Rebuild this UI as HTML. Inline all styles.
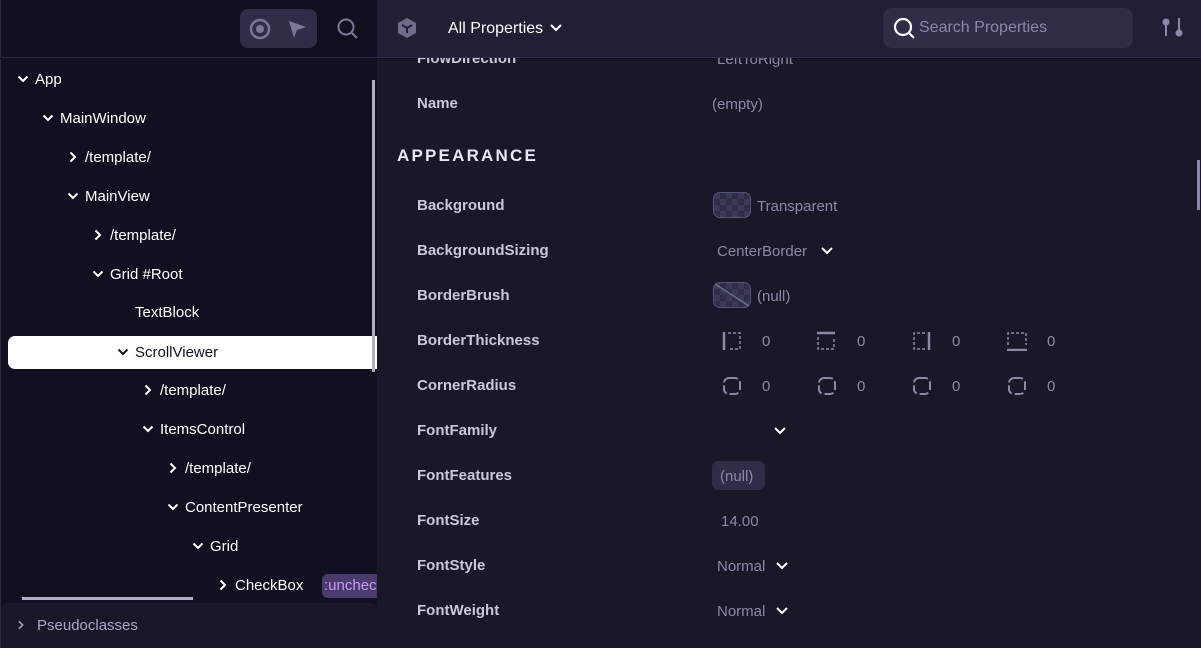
<!DOCTYPE html>
<html><head><style>
*{margin:0;padding:0;box-sizing:border-box}
body{width:1201px;height:648px;overflow:hidden;background:#101020;font-family:"Liberation Sans",sans-serif;font-size:15px;position:relative;color:#fff}
.abs{position:absolute}
.tree div{position:absolute;height:20px;line-height:20px;white-space:nowrap;color:#fff}
.tree svg{display:inline-block;vertical-align:-1px;margin-right:6px}
.lbl{position:absolute;left:417px;color:#c8c8dc;font-weight:bold;font-size:15px}
.val{position:absolute;color:#8a8aa8;font-size:15px}
.sw{position:absolute;left:713px;width:38px;height:26px;border:1.5px solid #55557a;border-radius:7px;background:
conic-gradient(#2e2e48 25%,#3a3a56 0 50%,#2e2e48 0 75%,#3a3a56 0) 0 0/12px 12px}
</style></head><body>
<svg width="0" height="0" style="position:absolute"><defs>
<symbol id="d" viewBox="0 0 12 12"><path d="M1.5 3.5 L6 8 L10.5 3.5" stroke="currentColor" stroke-width="2" fill="none"/></symbol>
<symbol id="r" viewBox="0 0 12 12"><path d="M3.5 1.5 L8 6 L3.5 10.5" stroke="currentColor" stroke-width="2" fill="none"/></symbol>
</defs></svg>
<!-- left header -->
<div class="abs" style="left:0;top:0;width:377px;height:58px;background:#101020;border-bottom:1px solid #2a2a40;border-left:1px solid #2a2a40"></div>
<div class="abs" style="left:240px;top:9px;width:77px;height:39px;background:#2e2e48;border-radius:8px"></div>
<svg class="abs" style="left:248px;top:17px" width="60" height="24"><circle cx="12" cy="12" r="9" fill="none" stroke="#7a7a98" stroke-width="2.5"/><circle cx="12" cy="12" r="4" fill="#7a7a98"/><path d="M41 4 L58 10 L49 13 L46 21 Z" fill="#7a7a98"/></svg>
<svg class="abs" style="left:336px;top:17px" width="24" height="24"><circle cx="10" cy="10" r="7.5" fill="none" stroke="#7a7a98" stroke-width="2"/><path d="M15.5 15.5 L21 21" stroke="#7a7a98" stroke-width="2"/></svg>
<!-- right body -->
<div class="abs" style="left:377px;top:59px;width:824px;height:589px;background:#181829"></div>
<div class="abs" style="left:1197px;top:160px;width:3px;height:50px;background:#8a8aa8"></div>
<div class="lbl" style="top:50px">FlowDirection</div><div class="val" style="left:717px;top:51px">LeftToRight</div>
<!-- right header -->
<div class="abs" style="left:377px;top:0;width:824px;height:58px;background:#1f1f36;border-bottom:1px solid #30304a"></div>
<svg class="abs" style="left:396px;top:17px" width="22" height="22"><path d="M11 1 L20 6 V16 L11 21 L2 16 V6 Z" fill="#6e6e8c"/><path d="M6 8 L11 11 L16 8 M11 11 V16" stroke="#1f1f36" stroke-width="2" fill="none"/></svg>
<div class="abs" style="left:448px;top:20px;font-size:16px;color:#fff">All Properties</div>
<svg class="abs" style="left:549px;top:22px" width="14" height="12"><path d="M2 3 L7 8 L12 3" stroke="#fff" stroke-width="2" fill="none"/></svg>
<div class="abs" style="left:883px;top:8px;width:250px;height:40px;background:#2e2e48;border-radius:9px"></div>
<svg class="abs" style="left:893px;top:17px" width="24" height="24"><circle cx="10" cy="10" r="8" fill="none" stroke="#fff" stroke-width="2.2"/><path d="M16 16 L21 21" stroke="#fff" stroke-width="2.2"/></svg>
<div class="abs" style="left:919px;top:19px;font-size:16px;color:#8a8aa8">Search Properties</div>
<svg class="abs" style="left:1160px;top:16px" width="26" height="24"><circle cx="6" cy="6" r="3.5" fill="#8a8aa8"/><path d="M6 6 V20" stroke="#8a8aa8" stroke-width="2"/><circle cx="19" cy="17" r="3.5" fill="#8a8aa8"/><path d="M19 2 V17" stroke="#8a8aa8" stroke-width="2"/></svg>

<div class="lbl" style="top:95px">Name</div><div class="val" style="left:712px;top:96px">(empty)</div>
<div class="abs" style="left:397px;top:146px;font-size:17px;font-weight:bold;letter-spacing:2.2px;color:#e8e8f4">APPEARANCE</div>
<div class="lbl" style="top:197px">Background</div><div class="sw" style="top:192px"></div><div class="val" style="left:757px;top:198px">Transparent</div>
<div class="lbl" style="top:242px">BackgroundSizing</div><div class="val" style="left:717px;top:243px">CenterBorder</div>
<svg class="abs" style="left:820px;top:245px" width="14" height="12"><path d="M2 3 L7 8 L12 3" stroke="#fff" stroke-width="2" fill="none"/></svg>
<div class="lbl" style="top:287px">BorderBrush</div><div class="sw" style="top:282px"></div><svg class="abs" style="left:713px;top:282px" width="38" height="26"><path d="M2 2 L36 24" stroke="#6a6a8a" stroke-width="1.5"/></svg><div class="val" style="left:757px;top:288px">(null)</div>
<div class="lbl" style="top:332px">BorderThickness</div>
<svg class="abs" style="left:722px;top:331px" width="350" height="20" fill="none" stroke="#8a8aa8">
<path d="M2 1 V19" stroke-width="2.5"/><path d="M6 2 H18 V18 H6" stroke-width="1.5" stroke-dasharray="3 2"/>
<path d="M95 2 H113" stroke-width="2.5"/><path d="M96 6 V18 H112 V6" stroke-width="1.5" stroke-dasharray="3 2"/>
<path d="M207 1 V19" stroke-width="2.5"/><path d="M203 2 H192 V18 H203" stroke-width="1.5" stroke-dasharray="3 2"/>
<path d="M285 19 H305" stroke-width="2.5"/><path d="M286 14 V2 H304 V14" stroke-width="1.5" stroke-dasharray="3 2"/>
</svg>
<div class="val" style="left:762px;top:333px">0</div><div class="val" style="left:857px;top:333px">0</div><div class="val" style="left:952px;top:333px">0</div><div class="val" style="left:1047px;top:333px">0</div>
<div class="lbl" style="top:377px">CornerRadius</div>
<svg class="abs" style="left:722px;top:376px" width="350" height="20" fill="none" stroke="#8a8aa8" stroke-width="2">
<rect x="2" y="2" width="16" height="16" rx="5" stroke-dasharray="9 3"/>
<rect x="97" y="2" width="16" height="16" rx="5" stroke-dasharray="9 3"/>
<rect x="192" y="2" width="16" height="16" rx="5" stroke-dasharray="9 3"/>
<rect x="287" y="2" width="16" height="16" rx="5" stroke-dasharray="9 3"/>
</svg>
<div class="val" style="left:762px;top:378px">0</div><div class="val" style="left:857px;top:378px">0</div><div class="val" style="left:952px;top:378px">0</div><div class="val" style="left:1047px;top:378px">0</div>
<div class="lbl" style="top:422px">FontFamily</div>
<svg class="abs" style="left:773px;top:425px" width="14" height="12"><path d="M2 3 L7 8 L12 3" stroke="#fff" stroke-width="2" fill="none"/></svg>
<div class="lbl" style="top:467px">FontFeatures</div>
<div class="abs" style="left:712px;top:461px;width:53px;height:29px;background:#2e2e48;border-radius:6px"></div><div class="val" style="left:720px;top:468px">(null)</div>
<div class="lbl" style="top:512px">FontSize</div><div class="val" style="left:721px;top:513px">14.00</div>
<div class="lbl" style="top:557px">FontStyle</div><div class="val" style="left:717px;top:558px">Normal</div>
<svg class="abs" style="left:775px;top:560px" width="14" height="12"><path d="M2 3 L7 8 L12 3" stroke="#fff" stroke-width="2" fill="none"/></svg>
<div class="lbl" style="top:602px">FontWeight</div><div class="val" style="left:717px;top:603px">Normal</div>
<svg class="abs" style="left:775px;top:605px" width="14" height="12"><path d="M2 3 L7 8 L12 3" stroke="#fff" stroke-width="2" fill="none"/></svg>
<!-- left tree -->
<div class="abs" style="left:0;top:59px;width:1px;height:589px;background:#2a2a40"></div>
<div class="abs" style="left:8px;top:336px;width:369px;height:33px;background:#fff;border-radius:7px 0 0 7px"></div>
<div class="abs" style="left:372px;top:80px;width:3px;height:292px;background:#b0b0c8"></div>
<div class="tree">
<div style="left:17px;top:70px"><svg width="12" height="12"><use href="#d"/></svg>App</div>
<div style="left:42px;top:109px"><svg width="12" height="12"><use href="#d"/></svg>MainWindow</div>
<div style="left:67px;top:148px"><svg width="12" height="12"><use href="#r"/></svg>/template/</div>
<div style="left:67px;top:187px"><svg width="12" height="12"><use href="#d"/></svg>MainView</div>
<div style="left:92px;top:226px"><svg width="12" height="12"><use href="#r"/></svg>/template/</div>
<div style="left:92px;top:265px"><svg width="12" height="12"><use href="#d"/></svg>Grid #Root</div>
<div style="left:135px;top:303px">TextBlock</div>
<div style="left:117px;top:343px;color:#101020"><svg width="12" height="12"><use href="#d"/></svg>ScrollViewer</div>
<div style="left:142px;top:381px"><svg width="12" height="12"><use href="#r"/></svg>/template/</div>
<div style="left:142px;top:420px"><svg width="12" height="12"><use href="#d"/></svg>ItemsControl</div>
<div style="left:167px;top:459px"><svg width="12" height="12"><use href="#r"/></svg>/template/</div>
<div style="left:167px;top:498px"><svg width="12" height="12"><use href="#d"/></svg>ContentPresenter</div>
<div style="left:192px;top:537px"><svg width="12" height="12"><use href="#d"/></svg>Grid</div>
<div style="left:217px;top:576px"><svg width="12" height="12"><use href="#r"/></svg>CheckBox</div>
</div>
<div class="abs" style="left:322px;top:574px;width:55px;height:24px;background:#4a3a6e;border-radius:6px 0 0 6px;overflow:hidden;color:#c89cf0;line-height:24px;padding-left:2px">:unchecked</div>
<div class="abs" style="left:22px;top:597px;width:171px;height:3px;background:#b0b0c8"></div>
<div class="abs" style="left:1px;top:603px;width:376px;height:45px;background:#181829;border-radius:6px 6px 0 0"></div>
<svg class="abs" style="left:16px;top:619px;color:#9a9ab8" width="10" height="12"><use href="#r"/></svg>
<div class="abs" style="left:37px;top:617px;color:#a8a8c8">Pseudoclasses</div>
</body></html>
